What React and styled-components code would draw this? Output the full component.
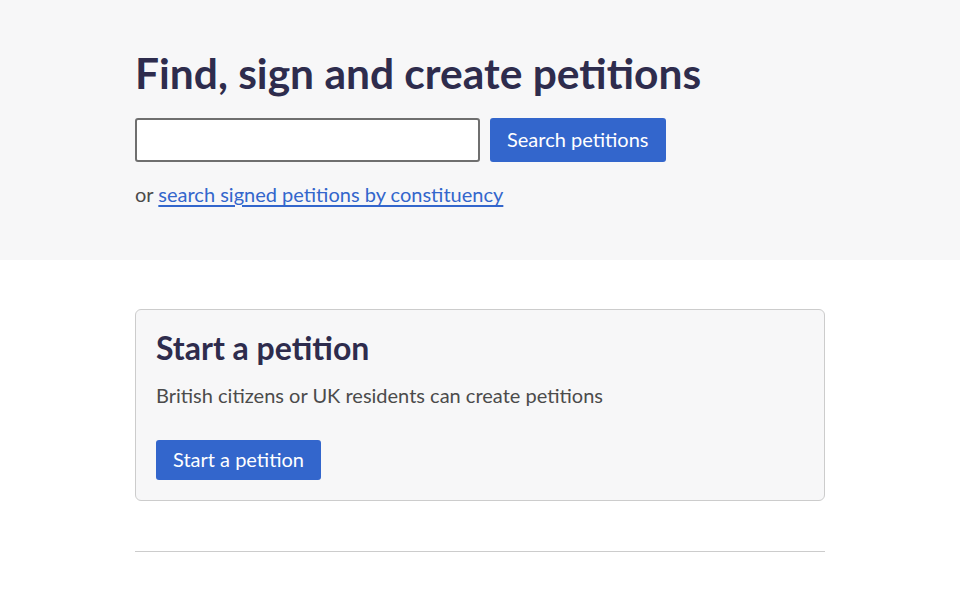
import React from 'react';
import styled, { createGlobalStyle } from 'styled-components';

const navy = '#2e2c4d';
const blue = '#3366cc';
const text = '#4b4b4b';
const grey = '#f7f7f8';
const rule = '#cccccc';

const GlobalStyle = createGlobalStyle`
  body {
    margin: 0;
    background: #fff;
    font-family: Lato, "Noto Sans", sans-serif;
    color: ${text};
  }
`;

const Hero = styled.section`
  background: ${grey};
  height: 260px;
  box-sizing: border-box;
  padding-top: 49px;
`;

const Container = styled.div`
  width: 690px;
  margin: 0 auto;
`;

const Title = styled.h1`
  margin: 0 0 21px;
  font-size: 42.5px;
  line-height: 48px;
  font-weight: 700;
  color: ${navy};
`;

const SearchRow = styled.form`
  display: flex;
  gap: 10px;
  align-items: stretch;
`;

const SearchInput = styled.input`
  width: 345px;
  height: 44px;
  box-sizing: border-box;
  border: 2px solid #6f6f6f;
  border-radius: 3px;
  background: #fff;
  font: inherit;
`;

const Button = styled.button`
  background: ${blue};
  color: #fff;
  border: none;
  border-radius: 3px;
  font-family: inherit;
  font-size: 20px;
  padding: 0 17px 2px;
  height: ${(p) => p.$height || 44}px;
  cursor: pointer;
`;

const Alt = styled.p`
  margin: 20px 0 0;
  font-size: 20px;
`;

const Link = styled.a`
  color: ${blue};
  text-decoration: underline;
  text-underline-offset: 3px;
`;

const Main = styled.main`
  padding-top: 49px;
`;

const Card = styled.div`
  border: 1px solid ${rule};
  border-radius: 6px;
  background: ${grey};
  padding: 20px;
`;

const CardTitle = styled.h2`
  margin: 0 0 16px;
  font-size: 32px;
  line-height: 36px;
  font-weight: 700;
  color: ${navy};
`;

const CardText = styled.p`
  margin: 0 0 32px;
  font-size: 20px;
  line-height: 26px;
`;

const Rule = styled.hr`
  margin: 50px 0 0;
  border: none;
  border-top: 1px solid ${rule};
`;

export default function App() {
  return (
    <>
      <GlobalStyle />
      <Hero>
        <Container>
          <Title>Find, sign and create petitions</Title>
          <SearchRow onSubmit={(e) => e.preventDefault()}>
            <SearchInput type="search" aria-label="Search petitions" />
            <Button type="submit">Search petitions</Button>
          </SearchRow>
          <Alt>
            or <Link href="#">search signed petitions by constituency</Link>
          </Alt>
        </Container>
      </Hero>
      <Main>
        <Container>
          <Card>
            <CardTitle>Start a petition</CardTitle>
            <CardText>British citizens or UK residents can create petitions</CardText>
            <Button $height={40}>Start a petition</Button>
          </Card>
          <Rule />
        </Container>
      </Main>
    </>
  );
}
